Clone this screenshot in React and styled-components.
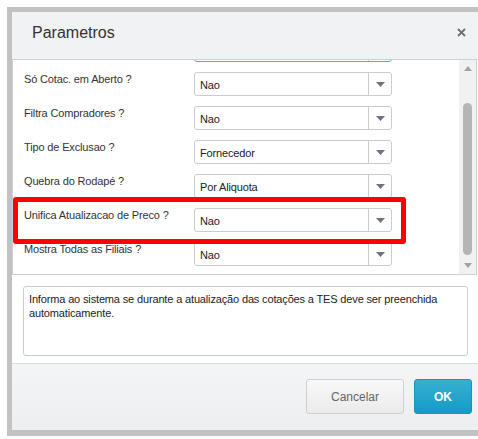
import React from 'react'
import styled, { createGlobalStyle } from 'styled-components'

const GlobalStyle = createGlobalStyle`
  html, body {
    margin: 0;
    padding: 0;
    background: #fff;
    overflow: hidden;
  }
  body {
    font-family: "Liberation Sans", Arial, sans-serif;
    font-size: 11px;
    letter-spacing: -0.15px;
    color: #333;
  }
`

const Page = styled.div`
  padding: 7px 0 0 7px;
  width: 478px;
  height: 439px;
  box-sizing: border-box;
`

const Frame = styled.div`
  border-left: 5px solid #c2c2c2;
  border-top: 5px solid #c2c2c2;
  border-bottom: 6px solid #c2c2c2;
  width: 480px;
`

const Dialog = styled.div`
  display: flex;
  flex-direction: column;
  height: 418px;
  background: #fff;
  position: relative;
`

const Header = styled.div`
  height: 48px;
  box-sizing: border-box;
  background: #f1f2f3;
  border-bottom: 1px solid #cfd0d1;
  display: flex;
  align-items: center;
  padding: 0 12px 6px 20px;
  width: 466px;
`

const Title = styled.h1`
  flex: 1;
  margin: 0;
  font-size: 16px;
  letter-spacing: 0;
  font-weight: normal;
  color: #333;
`

const CloseButton = styled.button`
  border: none;
  background: none;
  padding: 0;
  margin-top: 0;
  width: 9px;
  height: 9px;
  display: flex;
`

const ScrollPanel = styled.div`
  position: relative;
  display: flex;
  height: 215px;
  width: 465px;
  box-sizing: border-box;
  border-left: 1px solid #cfcfcf;
  border-right: 1px solid #cfcfcf;
  border-bottom: 1px solid #cfcfcf;
  overflow: hidden;
`

const FieldList = styled.div`
  flex: 1;
  margin-top: -27px;
`

const Row = styled.div`
  display: flex;
  align-items: flex-start;
  height: 34px;
`

const Label = styled.div`
  width: 170px;
  padding-left: 11px;
  margin-top: 5px;
  line-height: 14px;
  color: #333;
`

const Select = styled.div`
  margin-top: 5px;
  width: 198px;
  height: 24px;
  box-sizing: border-box;
  border: 1px solid ${props => (props.focused ? '#3db5dd' : '#cccccc')};
  border-radius: 3px;
  display: flex;
  align-items: center;
  background: #fff;
`

const SelectValue = styled.span`
  flex: 1;
  padding-left: 5px;
  color: #222;
  padding-top: 2px;
`

const ArrowCell = styled.span`
  width: 22px;
  height: 100%;
  border-left: 1px solid #cccccc;
  display: flex;
  align-items: center;
  justify-content: center;
`

const Scrollbar = styled.div`
  width: 17px;
  background: #f1f1f1;
  display: flex;
  flex-direction: column;
  align-items: center;
`

const ScrollArrow = styled.div`
  height: 17px;
  display: flex;
  align-items: center;
  justify-content: center;
`

const ScrollTrack = styled.div`
  flex: 1;
  width: 100%;
  display: flex;
  justify-content: center;
  padding-top: 26px;
  padding-bottom: 3px;
  box-sizing: border-box;
`

const Thumb = styled.div`
  width: 9px;
  height: 152px;
  border-radius: 5px;
  background: #b5b5b5;
`

const Highlight = styled.div`
  position: absolute;
  left: 0;
  top: 137px;
  width: 393px;
  height: 47px;
  box-sizing: border-box;
  border: 5px solid #ff0000;
  border-radius: 3px;
  pointer-events: none;
`

const Help = styled.div`
  margin: 11px 0 0 11px;
  width: 445px;
  height: 70px;
  box-sizing: border-box;
  border: 1px solid #cccccc;
  border-radius: 3px;
  padding: 5px 5px;
  line-height: 14px;
  color: #222;
`

const Footer = styled.div`
  margin-top: 7px;
  flex: 1;
  border-top: 1px solid #dadbdc;
  background: linear-gradient(#f4f5f6, #eceef0);
  display: flex;
  justify-content: flex-end;
  align-items: flex-start;
  gap: 10px;
  padding: 15px 6px 0 0;
  width: 466px;
  box-sizing: border-box;
`

const Button = styled.button`
  height: 35px;
  width: ${props => props.width}px;
  border-radius: 3px;
  font-family: "Liberation Sans", Arial, sans-serif;
  font-size: 12px;
  cursor: pointer;
  border: 1px solid ${props => (props.primary ? '#1894bb' : '#cfd0d1')};
  background: ${props =>
    props.primary
      ? 'linear-gradient(#36b0d4, #149bc4)'
      : 'linear-gradient(#f8f8f8, #ebebeb)'};
  color: ${props => (props.primary ? '#fff' : '#666')};
  font-weight: ${props => (props.primary ? 'bold' : 'normal')};
`

const Triangle = ({ color = '#6d7380', down = true, w = 9, h = 5 }) => (
  <svg width={w} height={h} viewBox={`0 0 ${w} ${h}`}>
    <polygon
      points={down ? `0,0 ${w},0 ${w / 2},${h}` : `0,${h} ${w},${h} ${w / 2},0`}
      fill={color}
    />
  </svg>
)

const fields = [
  { label: 'Considera Pedidos ?', value: 'Sim', focused: true },
  { label: 'Só Cotac. em Aberto ?', value: 'Nao' },
  { label: 'Filtra Compradores ?', value: 'Nao' },
  { label: 'Tipo de Exclusao ?', value: 'Fornecedor' },
  { label: 'Quebra do Rodapé ?', value: 'Por Aliquota' },
  { label: 'Unifica Atualizacao de Preco ?', value: 'Nao' },
  { label: 'Mostra Todas as Filiais ?', value: 'Nao' },
  { label: 'Aglutina Produtos ?', value: 'Nao' },
]

const App = () => {
  return (
    <Page>
      <GlobalStyle />
      <Frame>
        <Dialog>
          <Header>
            <Title>Parametros</Title>
            <CloseButton aria-label="Fechar">
              <svg width="9" height="9" viewBox="0 0 9 9">
                <path d="M1 1 L8 8 M8 1 L1 8" stroke="#6a6f78" strokeWidth="1.8" />
              </svg>
            </CloseButton>
          </Header>
          <ScrollPanel>
            <FieldList>
              {fields.map(f => (
                <Row key={f.label}>
                  <Label>{f.label}</Label>
                  <Select focused={f.focused}>
                    <SelectValue>{f.value}</SelectValue>
                    <ArrowCell>
                      <Triangle />
                    </ArrowCell>
                  </Select>
                </Row>
              ))}
            </FieldList>
            <Scrollbar>
              <ScrollArrow>
                <Triangle down={false} color="#a3a3a3" w={8} h={5} />
              </ScrollArrow>
              <ScrollTrack>
                <Thumb />
              </ScrollTrack>
              <ScrollArrow>
                <Triangle color="#a3a3a3" w={8} h={5} />
              </ScrollArrow>
            </Scrollbar>
            <Highlight />
          </ScrollPanel>
          <Help>
            Informa ao sistema se durante a atualização das cotações a TES deve ser preenchida
            automaticamente.
          </Help>
          <Footer>
            <Button width={98}>Cancelar</Button>
            <Button primary width={58}>OK</Button>
          </Footer>
        </Dialog>
      </Frame>
    </Page>
  )
}

export default App
